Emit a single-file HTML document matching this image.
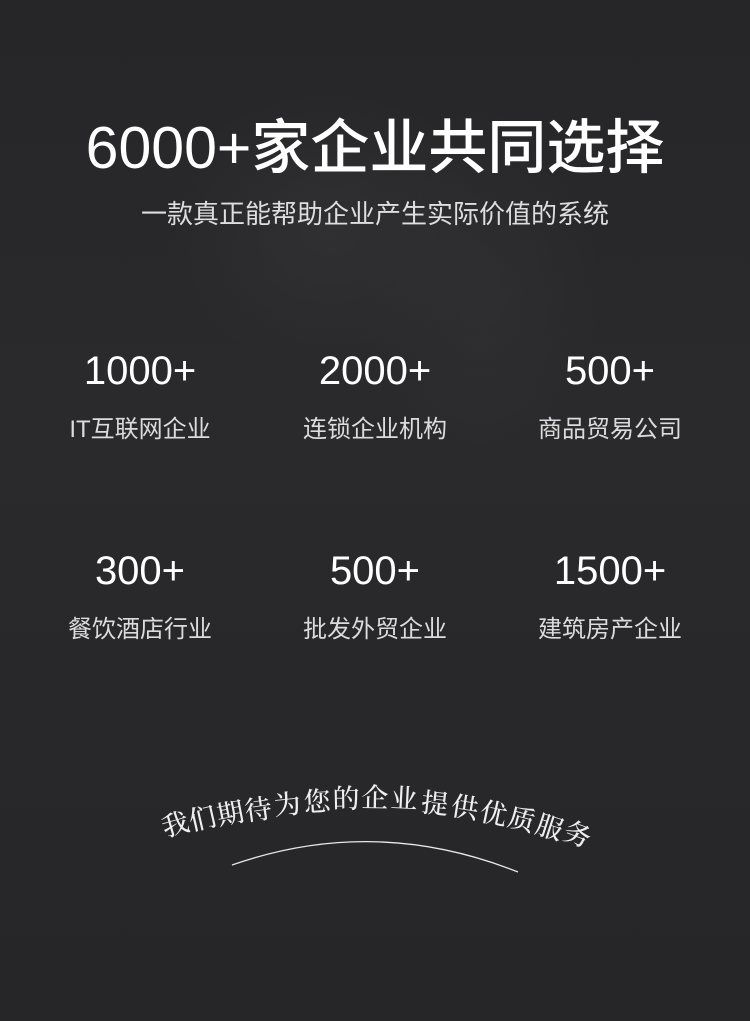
<!DOCTYPE html>
<html><head><meta charset="utf-8"><style>
html,body{margin:0;padding:0}
body{width:750px;height:1021px;overflow:hidden;position:relative;background:#28282a;font-family:"Liberation Sans","Noto Sans CJK SC",sans-serif;color:#fff}
.bg{position:absolute;inset:0;background:
radial-gradient(ellipse 160px 140px at 330px 230px,rgba(60,60,62,.4),rgba(0,0,0,0)),
radial-gradient(ellipse 120px 180px at 480px 290px,rgba(55,55,57,.4),rgba(0,0,0,0)),
linear-gradient(180deg,#262628 0%,#2a2a2c 40%,#262628 100%)}
.t{position:absolute;left:0;width:750px;text-align:center;white-space:nowrap}
.n{position:absolute;width:240px;text-align:center;font-size:40px;line-height:40px}
.l{position:absolute;width:240px;text-align:center;font-size:24px;line-height:26px;color:#dcdcdc}
.h{position:absolute;font-size:27px;color:#eee;font-family:"Noto Serif CJK SC","Liberation Serif",serif;font-weight:500;transform-origin:center;line-height:28px;width:28px;text-align:center;margin-left:-14px;margin-top:-14px}
</style></head><body>
<div class="bg"></div>
<div class="t" style="top:116px;font-size:59px;line-height:64px;font-weight:500">6000+家企业共同选择</div>
<div class="t" style="top:199px;font-size:26px;line-height:30px;color:#dedede">一款真正能帮助企业产生实际价值的系统</div>

<div class="n" style="left:20px;top:351px">1000+</div>
<div class="n" style="left:255px;top:351px">2000+</div>
<div class="n" style="left:490px;top:351px">500+</div>
<div class="l" style="left:20px;top:417px">IT互联网企业</div>
<div class="l" style="left:255px;top:417px">连锁企业机构</div>
<div class="l" style="left:490px;top:417px">商品贸易公司</div>

<div class="n" style="left:20px;top:551px">300+</div>
<div class="n" style="left:255px;top:551px">500+</div>
<div class="n" style="left:490px;top:551px">1500+</div>
<div class="l" style="left:20px;top:617px">餐饮酒店行业</div>
<div class="l" style="left:255px;top:617px">批发外贸企业</div>
<div class="l" style="left:490px;top:617px">建筑房产企业</div>

<div class="h" style="left:175px;top:823px;transform:rotate(-16deg)">我</div>
<div class="h" style="left:202px;top:817px;transform:rotate(-13deg)">们</div>
<div class="h" style="left:230px;top:812px;transform:rotate(-11deg)">期</div>
<div class="h" style="left:258px;top:808px;transform:rotate(-8deg)">待</div>
<div class="h" style="left:287px;top:803px;transform:rotate(-6deg)">为</div>
<div class="h" style="left:317px;top:800px;transform:rotate(-3deg)">您</div>
<div class="h" style="left:346px;top:797px;transform:rotate(-1deg)">的</div>
<div class="h" style="left:375px;top:796px;transform:rotate(1deg)">企</div>
<div class="h" style="left:404px;top:797px;transform:rotate(3deg)">业</div>
<div class="h" style="left:435px;top:802px;transform:rotate(6deg)">提</div>
<div class="h" style="left:465px;top:806px;transform:rotate(9deg)">供</div>
<div class="h" style="left:494px;top:812px;transform:rotate(12deg)">优</div>
<div class="h" style="left:522px;top:818px;transform:rotate(15deg)">质</div>
<div class="h" style="left:550px;top:826px;transform:rotate(18deg)">服</div>
<div class="h" style="left:578px;top:833px;transform:rotate(21deg)">务</div>

<svg style="position:absolute;left:0;top:0" width="750" height="1021">
<path d="M232 865 Q375 815 518 872" fill="none" stroke="#e8e8e8" stroke-width="1.3"/>
</svg>
</body></html>
